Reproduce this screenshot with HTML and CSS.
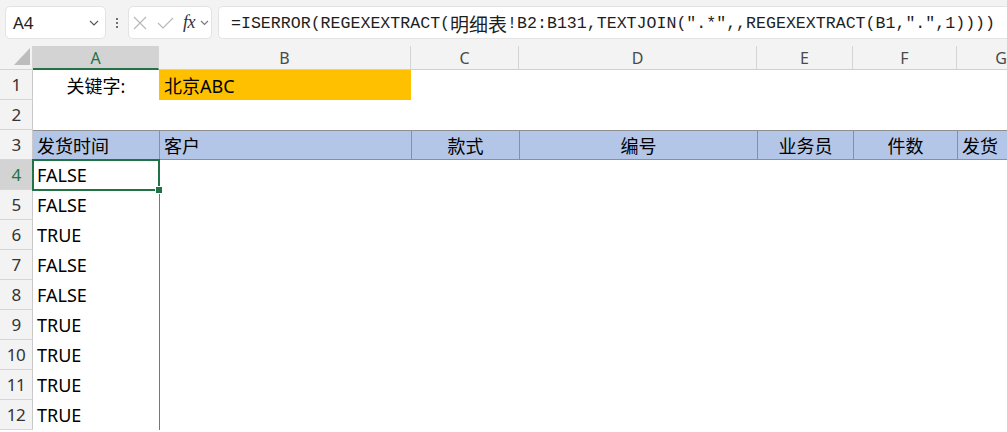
FILE: index.html
```html
<!DOCTYPE html>
<html lang="zh">
<head>
<meta charset="utf-8">
<title>Sheet</title>
<link rel="stylesheet" href="styles.css">
</head>
<body>
<div class="toolbar">
  <div class="namebox">
    <span class="nb-text">A4</span>
    <svg class="chev" width="10" height="6" viewBox="0 0 10 6"><polyline points="1,1 5,5 9,1" fill="none" stroke="#555" stroke-width="1.1"/></svg>
  </div>
  <div class="vdots"><i></i><i></i><i></i></div>
  <div class="fxbox">
    <svg width="14" height="14" viewBox="0 0 14 14"><path d="M1,1 L13,13 M13,1 L1,13" stroke="#b8b8b8" stroke-width="1.2" fill="none"/></svg>
    <svg class="check" width="17" height="12" viewBox="0 0 17 12"><polyline points="1,6 6,11 16,1" fill="none" stroke="#b8b8b8" stroke-width="1.2"/></svg>
    <span class="fx">fx</span>
    <svg class="chev2" width="9" height="6" viewBox="0 0 9 6"><polyline points="1,1 4.5,4.5 8,1" fill="none" stroke="#777" stroke-width="1.1"/></svg>
  </div>
  <div class="formula">=ISERROR(REGEXEXTRACT(<span class="cjk">明细表</span>!B2:B131,TEXTJOIN(".*",,REGEXEXTRACT(B1,".",1))))</div>
</div>

<div class="sheet">
  <div class="corner"><svg width="17" height="18" viewBox="0 0 17 18"><polygon points="16,0 16,17 0,17" fill="#bdbdbd"/></svg></div>
  <div class="ch ch-sel">A</div>
  <div class="ch">B</div>
  <div class="ch">C</div>
  <div class="ch">D</div>
  <div class="ch">E</div>
  <div class="ch">F</div>
  <div class="ch ch-last">G</div>

  <div class="rh">1</div>
  <div class="c center">关键字:</div>
  <div class="c gold">北京ABC</div>
  <div class="c"></div><div class="c"></div><div class="c"></div><div class="c"></div><div class="c"></div>

  <div class="rh">2</div>
  <div class="c"></div><div class="c"></div><div class="c"></div><div class="c"></div><div class="c"></div><div class="c"></div><div class="c"></div>

  <div class="rh">3</div>
  <div class="c hd hd-first">发货时间</div>
  <div class="c hd">客户</div>
  <div class="c hd center">款式</div>
  <div class="c hd center">编号</div>
  <div class="c hd center">业务员</div>
  <div class="c hd center">件数</div>
  <div class="c hd">发货</div>

  <div class="rh rh-sel">4</div>
  <div class="c sel">FALSE<span class="handle"></span></div>
  <div class="c"></div><div class="c"></div><div class="c"></div><div class="c"></div><div class="c"></div><div class="c"></div>

  <div class="rh">5</div>
  <div class="c">FALSE</div>
  <div class="c edge"></div><div class="c"></div><div class="c"></div><div class="c"></div><div class="c"></div><div class="c"></div>

  <div class="rh">6</div>
  <div class="c">TRUE</div>
  <div class="c edge"></div><div class="c"></div><div class="c"></div><div class="c"></div><div class="c"></div><div class="c"></div>

  <div class="rh">7</div>
  <div class="c">FALSE</div>
  <div class="c edge"></div><div class="c"></div><div class="c"></div><div class="c"></div><div class="c"></div><div class="c"></div>

  <div class="rh">8</div>
  <div class="c">FALSE</div>
  <div class="c edge"></div><div class="c"></div><div class="c"></div><div class="c"></div><div class="c"></div><div class="c"></div>

  <div class="rh">9</div>
  <div class="c">TRUE</div>
  <div class="c edge"></div><div class="c"></div><div class="c"></div><div class="c"></div><div class="c"></div><div class="c"></div>

  <div class="rh">10</div>
  <div class="c">TRUE</div>
  <div class="c edge"></div><div class="c"></div><div class="c"></div><div class="c"></div><div class="c"></div><div class="c"></div>

  <div class="rh">11</div>
  <div class="c">TRUE</div>
  <div class="c edge"></div><div class="c"></div><div class="c"></div><div class="c"></div><div class="c"></div><div class="c"></div>

  <div class="rh">12</div>
  <div class="c">TRUE</div>
  <div class="c edge"></div><div class="c"></div><div class="c"></div><div class="c"></div><div class="c"></div><div class="c"></div>
</div>
</body>
</html>
```

FILE: styles.css
```css
* { box-sizing: border-box; }
html, body { margin: 0; padding: 0; background: #ffffff; overflow: hidden; }
body { width: 1007px; height: 432px; font-family: "Noto Sans", "Noto Sans CJK SC", sans-serif; }

.toolbar {
  height: 46px;
  background: #f3f3f3;
  display: flex;
  align-items: flex-start;
  padding: 6px 0 0 5px;
  white-space: nowrap;
  overflow: hidden;
}
.namebox {
  width: 101px;
  height: 33px;
  background: #fff;
  border: 1px solid #e3e3e3;
  border-radius: 5px;
  display: flex;
  align-items: center;
  justify-content: space-between;
  padding: 0 6px 0 7px;
  flex: none;
}
.nb-text { font-size: 17px; color: #222; }
.chev { margin-top: 1px; }
.vdots {
  width: 22px;
  height: 33px;
  display: flex;
  flex-direction: column;
  align-items: center;
  justify-content: center;
  gap: 2px;
  flex: none;
}
.vdots i { display: block; width: 2px; height: 2px; background: #444; border-radius: 1px; }
.fxbox {
  width: 84px;
  height: 33px;
  background: #fff;
  border: 1px solid #e3e3e3;
  border-radius: 5px;
  display: flex;
  align-items: center;
  padding-left: 4px;
  flex: none;
}
.check { margin-left: 10px; }
.fx {
  font-family: "Liberation Serif", "DejaVu Serif", serif;
  font-style: italic;
  font-size: 18px;
  color: #333;
  margin-left: 9px;
  letter-spacing: -0.5px;
}
.chev2 { margin-left: 5px; margin-top: 1px; }
.formula {
  margin-left: 6px;
  height: 33px;
  width: 800px;
  flex: none;
  background: #fff;
  border: 1px solid #e3e3e3;
  border-radius: 5px 0 0 5px;
  border-right: none;
  padding-left: 12px;
  padding-top: 1px;
  display: flex;
  align-items: center;
  font-family: "Liberation Mono", "DejaVu Sans Mono", "Noto Sans CJK SC", monospace;
  font-size: 16.6px;
  color: #1e1e1e;
}
.formula .cjk { font-family: "Noto Sans CJK SC", sans-serif; font-size: 19px; }

.sheet {
  display: grid;
  grid-template-columns: 33px 126px 252px 108px 238px 96px 104px 88px;
  grid-template-rows: 24px repeat(12, 30px);
  overflow: hidden;
  width: 1007px;
}
.corner {
  background: #f3f3f3;
  border-right: 1px solid #d4d4d4;
  border-bottom: 1px solid #d4d4d4;
  display: flex;
  align-items: flex-end;
  justify-content: flex-end;
  padding: 0 1px 3px 0;
}
.ch {
  background: #f3f3f3;
  border-right: 1px solid #d4d4d4;
  border-bottom: 1px solid #cfcfcf;
  display: flex;
  align-items: center;
  justify-content: center;
  font-size: 16px;
  color: #4a4a4a;
  padding-top: 1px;
}
.ch-last { border-right: none; }
.ch-sel {
  background: #d3d3d3;
  color: #217346;
  border-bottom: 2px solid #217346;
}
.rh {
  background: #f3f3f3;
  border-right: 1px solid #c9c9c9;
  border-bottom: 1px solid #d6d6d6;
  display: flex;
  align-items: center;
  justify-content: center;
  font-size: 17px;
  color: #333;
  letter-spacing: -0.5px;
}
.rh-sel { background: #d3d3d3; color: #217346; }

.c {
  display: flex;
  align-items: center;
  padding-left: 4px;
  font-size: 18px;
  color: #000;
  white-space: nowrap;
  overflow: hidden;
  position: relative;
}
.c.center { justify-content: center; padding-left: 0; }
.gold { background: #ffc000; padding-left: 5px; }
.hd {
  background: #b4c6e7;
  border-top: 1px solid #8f8f8f;
  border-bottom: 1px solid #8f8f8f;
  border-left: 1px solid #8f8f8f;
  padding-left: 4px;
}
.hd-first { border-left: none; padding-left: 4px; }
.edge { border-left: 1px solid #4f7cc4; }
.sel { overflow: visible; }
.sel::after {
  content: "";
  position: absolute;
  left: -1px;
  top: -1px;
  right: -1px;
  bottom: -1px;
  border: 2px solid #217346;
  pointer-events: none;
}
.handle {
  position: absolute;
  right: -4px;
  bottom: -4px;
  width: 6px;
  height: 6px;
  background: #217346;
  border: 1px solid #fff;
  box-sizing: content-box;
  z-index: 2;
}
```
